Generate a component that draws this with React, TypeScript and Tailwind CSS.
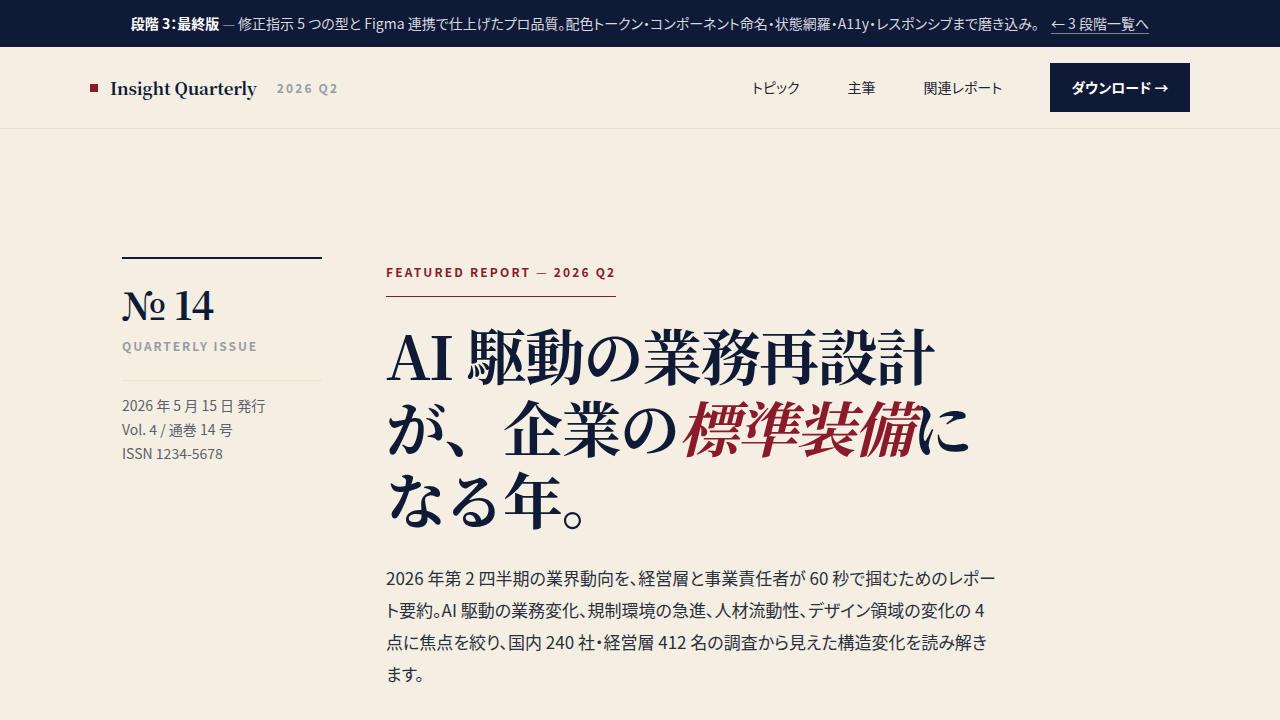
import React from 'react';

const sans = { fontFamily: '"Noto Sans CJK JP", "Noto Sans", sans-serif' };
const serif = { fontFamily: '"Noto Serif CJK JP", "Noto Serif JP", "Noto Serif", "Liberation Serif", serif' };

const navItems = ['トピック', '主筆', '関連レポート'];

const App: React.FC = () => {
  return (
    <div className="min-h-screen bg-[#f5efe3] text-[#0f1a36]" style={sans}>
      {/* stage banner */}
      <div className="h-[47px] bg-[#0f1a36] flex items-center justify-center gap-3 text-[14px] text-[#d6d9e0] [font-feature-settings:'palt']">
        <p>
          <span className="font-bold text-white">段階 3：最終版</span>
          <span className="text-[#7d8499]"> — </span>
          修正指示 5 つの型と Figma 連携で仕上げたプロ品質。配色トークン・コンポーネント命名・状態網羅・A11y・レスポンシブまで磨き込み。
        </p>
        <a href="#" className="text-[#d6d9e0] border-b border-[#7d8499] leading-[19px]">← 3 段階一覧へ</a>
      </div>

      {/* header */}
      <header className="h-[82px] border-b border-[#e6dcc6] flex items-center justify-between pl-[90px] pr-[90px]">
        <div className="flex items-center">
          <span className="w-2 h-2 bg-[#8b1a2b] mr-3" />
          <span className="text-[17px] font-bold tracking-[-0.01em]" style={serif}>Insight Quarterly</span>
          <span className="ml-5 text-[12px] font-bold tracking-[0.18em] text-[#9a9ba3]">2026 Q2</span>
        </div>
        <nav className="flex items-center [font-feature-settings:'palt']">
          {navItems.map((item) => (
            <a key={item} href="#" className="text-[14px] text-[#1f2535] mr-12">{item}</a>
          ))}
          <button className="w-[140px] h-[49px] bg-[#0f1a36] text-white text-[14px] font-bold">ダウンロード →</button>
        </nav>
      </header>

      {/* hero */}
      <main className="flex pl-[122px] pt-[128px]">
        <aside className="w-[200px] shrink-0 border-t-2 border-[#0f1a36] pt-5">
          <div className="text-[39px] font-bold leading-[48px] tracking-tight" style={serif}>№ 14</div>
          <div className="mt-[10px] text-[12px] font-bold tracking-[0.16em] text-[#9a9ba3]">QUARTERLY ISSUE</div>
          <div className="mt-[25px] border-t border-[#ebe1cc] pt-3 text-[14px] leading-[24px] text-[#5b5f6b]">
            <p>2026 年 5 月 15 日 発行</p>
            <p>Vol. 4 / 通巻 14 号</p>
            <p>ISSN 1234-5678</p>
          </div>
        </aside>

        <section className="ml-[64px] w-[620px]">
          <div className="inline-block text-[12px] font-bold tracking-[0.18em] text-[#8b1a2b] pt-[6px] pb-[15px] border-b border-[#8b1a2b]">
            FEATURED REPORT <span className="font-normal"> — </span> 2026 Q2
          </div>
          <h1 className="mt-[21px] max-w-[620px] text-[60px] font-bold leading-[72px] tracking-tight" style={serif}>
            AI 駆動の業務再設計が、企業の<em className="text-[#8b1a2b] italic">標準装備</em>になる年。
          </h1>
          <p className="mt-7 max-w-[612px] text-[17px] leading-[32px] text-[#2a2f3d] [font-feature-settings:'palt']">
            2026 年第 2 四半期の業界動向を、経営層と事業責任者が 60 秒で掴むためのレポート要約。AI 駆動の業務変化、規制環境の急進、人材流動性、デザイン領域の変化の 4 点に焦点を絞り、国内 240 社・経営層 412 名の調査から見えた構造変化を読み解きます。
          </p>
        </section>
      </main>
    </div>
  );
};

export default App;
